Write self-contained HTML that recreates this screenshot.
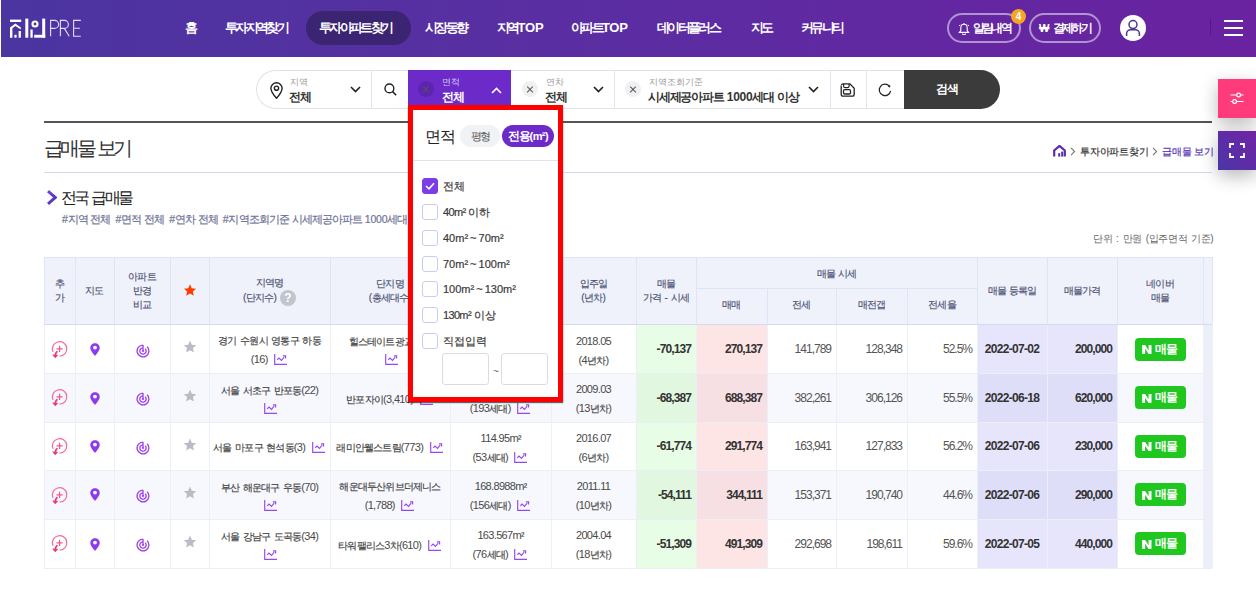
<!DOCTYPE html>
<html lang="ko"><head><meta charset="utf-8"><title>급매물 보기</title>
<style>
*{box-sizing:border-box;margin:0;padding:0}
html,body{width:1256px;height:601px;overflow:hidden;background:#fff}
body{position:relative;font-family:"Liberation Sans",sans-serif;color:#333}
.abs{position:absolute}
.hdr{position:absolute;left:1px;top:0;width:1255px;height:57px;background:linear-gradient(90deg,#4b35a0 0%,#5a2ea2 45%,#6a22a0 100%)}
.nav{position:absolute;top:0;height:57px;line-height:55px;color:#fff;font-weight:bold;font-size:13px;letter-spacing:-2.7px;white-space:nowrap}
.pill{position:absolute;left:305px;top:11px;width:105px;height:34px;border-radius:17px;background:#3b2472}
.hbtn{position:absolute;top:13px;height:30px;border:2px solid rgba(255,255,255,.5);border-radius:15px;color:#fff;font-size:11.5px;font-weight:bold;letter-spacing:-2.6px;white-space:nowrap}
.badge{position:absolute;left:1010px;top:9px;width:15px;height:15px;border-radius:7.5px;background:#f6a623;color:#fff;font-size:10px;font-weight:bold;text-align:center;line-height:15px}
.search{position:absolute;left:256px;top:70px;width:744px;height:39px}
.sb-frame{position:absolute;left:0;top:0;width:700px;height:39px;border:1px solid #e1e3ea;border-right:none;border-radius:19.5px 0 0 19.5px;background:#fff}
.seg-div{position:absolute;top:0;width:1px;height:39px;background:#e3e5ee}
.lbl{position:absolute;font-size:8.5px;color:#999;letter-spacing:0;white-space:nowrap;line-height:10px}
.val{position:absolute;font-size:12px;font-weight:bold;color:#333;letter-spacing:-0.7px;white-space:nowrap;line-height:13px}
.xc{position:absolute;width:16px;height:16px;border-radius:8px;background:#f0f0f2}
.xc:before,.xc:after{content:"";position:absolute;left:4px;top:7.5px;width:8px;height:1.2px;background:#555;transform:rotate(45deg)}
.xc:after{transform:rotate(-45deg)}
.line-dark{position:absolute;left:44px;top:121px;width:1168px;height:2px;background:#555}
.line-light{position:absolute;left:44px;top:172px;width:1168px;height:1px;background:#d5d9ee}
.title{position:absolute;left:44px;top:138px;font-size:19.5px;color:#333;letter-spacing:-3.6px;word-spacing:2px;white-space:nowrap;line-height:20px}
.crumb{position:absolute;top:146px;font-size:10px;letter-spacing:-0.2px;white-space:nowrap;line-height:11px;color:#333;-webkit-text-stroke:0.2px currentColor}
.sub{position:absolute;left:61px;top:189px;font-size:16px;color:#222;letter-spacing:-2.7px;word-spacing:2px;line-height:17px;white-space:nowrap}
.tags{position:absolute;left:62px;top:214px;font-size:10.5px;color:#6d7396;letter-spacing:-0.9px;word-spacing:0.5px!important;line-height:11px;white-space:nowrap;-webkit-text-stroke:0.2px #6d7396}
.unit{position:absolute;left:1093px;top:233px;font-size:10px;color:#666;letter-spacing:-0.4px;line-height:11px;white-space:nowrap}
.thead{position:absolute;left:44px;top:257px;width:1168px;height:68px;background:#eff2fb;border-top:1px solid #dfe5f6}
.th{position:absolute;display:flex;align-items:center;justify-content:center;text-align:center;font-size:10px;color:#4a5072;letter-spacing:-0.9px;word-spacing:1px;line-height:14px;font-weight:normal;-webkit-text-stroke:0.15px #4a5072}
.rowbg{position:absolute;left:44px;width:1168px}
.cell{position:absolute;display:flex;align-items:center;justify-content:center}
.cell.r{justify-content:flex-end;padding-right:5px}
.cell.c{text-align:center}
.t{font-size:10px;color:#3c3c3c;-webkit-text-stroke:0.15px #3c3c3c;letter-spacing:-0.8px;line-height:18px;white-space:nowrap;padding-top:3px}
.t .ch{vertical-align:-2px;margin-left:3px}
.num{font-size:12px;color:#555;letter-spacing:-1px;white-space:nowrap}
.num.b{font-weight:bold;color:#333;letter-spacing:-0.9px}
.num.bd{font-weight:bold;color:#333;letter-spacing:-0.7px}
.nbtn{display:inline-block;width:51px;height:23px;border-radius:4px;background:#1fc71f;color:#fff;font-size:11.5px;font-weight:bold;text-align:center;line-height:23px;letter-spacing:-1.4px;white-space:nowrap;padding-right:1px}
.nbtn b{font-size:13px;font-family:"Liberation Sans",sans-serif;letter-spacing:0;margin-right:3px;-webkit-text-stroke:0.6px #fff}
.vl{position:absolute;width:1px;background:#eceef8}
.a{font-size:1.1em;letter-spacing:-0.06em}
.t .a{color:#4a4a4a;-webkit-text-stroke:0}
.nav .a,.val .a,.tags .a,.crumb .a,.cbl .a,.unit .a,.th .a{font-size:1em;letter-spacing:-0.02em}
.val,.tags,.unit,.t,.th{word-spacing:1.5px}
.cbl{word-spacing:-1px}
.cbl .a{letter-spacing:-0.06em}
.hl{position:absolute;left:44px;width:1168px;height:1px;background:#eceef6}
.ic svg{display:block}
.ic .nbtn svg{display:inline-block}
.dd{position:absolute;left:408px;top:105px;width:155px;height:297px;background:#fff;border:5px solid #ff0000;box-shadow:0 1px 1px rgba(0,0,0,.6)}
.cb{position:absolute;left:9px;width:16px;height:16px;border:1.3px solid #c9cdef;border-radius:3px;background:#fff}
.cbl{position:absolute;left:30px;font-size:11px;color:#3a3a3a;letter-spacing:0;line-height:12px;white-space:nowrap;-webkit-text-stroke:0.2px #3a3a3a}
.fab{position:absolute;left:1218px;width:38px;height:39px;box-shadow:0 6px 18px rgba(0,0,0,.28)}
</style></head><body>

<!-- HEADER -->
<div class="hdr">
  <svg class="abs" style="left:8px;top:18px" width="76" height="21" viewBox="0 0 76 21">
    <g fill="#fff">
      <rect x="1" y="1.6" width="11.2" height="2.4"/>
      <path d="M1 19.7V9.4L6.4 5.6L11.8 9.4V11.6L6.4 8L3.4 10.2V19.7Z"/>
      <rect x="5.4" y="16.8" width="2.2" height="2.9"/>
      <rect x="9.6" y="13" width="2.3" height="6.7"/>
      <rect x="16.3" y="0.6" width="3" height="19.1"/>
      <circle cx="26" cy="6" r="2.5" fill="none" stroke="#fff" stroke-width="2.1"/>
      <rect x="21.4" y="11.5" width="2.3" height="8.2"/>
      <rect x="33.2" y="0.6" width="3" height="19.1"/>
      <rect x="25.2" y="16.8" width="11" height="2.9"/>
    </g>
    <g fill="none" stroke="#e6dcf7" stroke-width="1.1">
      <path d="M41.6 18.2V2.4H45.6A4 4 0 0 1 45.6 10.4H41.6"/>
      <path d="M51.4 18.2V2.4H55.4A4 4 0 0 1 55.4 10.4H51.4M55.4 10.4L60.2 18.2"/>
      <path d="M71.8 2.4H64.6V18.2H71.8M64.6 10.3H70.9"/>
    </g>
  </svg>
  <div class="pill"></div>
  <div class="nav" style="left:184px">홈</div>
  <div class="nav" style="left:224px">투자지역찾기</div>
  <div class="nav" style="left:318px">투자아파트찾기</div>
  <div class="nav" style="left:424px">시장동향</div>
  <div class="nav" style="left:496px">지역<span class="a">TOP</span></div>
  <div class="nav" style="left:570px">아파트<span class="a">TOP</span></div>
  <div class="nav" style="left:656px">데이터플러스</div>
  <div class="nav" style="left:750px">지도</div>
  <div class="nav" style="left:800px">커뮤니티</div>

  <div class="hbtn" style="left:946px;width:74px">
    <svg class="abs" style="left:9px;top:8px" width="12" height="12" viewBox="0 0 12 12"><path d="M6 1.2C3.8 1.2 2.8 2.9 2.8 4.9V7.6L1.4 9.4H10.6L9.2 7.6V4.9C9.2 2.9 8.2 1.2 6 1.2Z" fill="none" stroke="#fff" stroke-width="1.1"/><path d="M4.6 10.5A1.4 1.4 0 0 0 7.4 10.5" fill="none" stroke="#fff" stroke-width="1.1"/><path d="M1.2 3L2.2 1.8M10.8 3L9.8 1.8M6 0V1" stroke="#fff" stroke-width="1"/></svg>
    <span class="abs" style="left:23.5px;top:6.5px;line-height:13px">알림내역</span>
  </div>
  <div class="badge">4</div>
  <div class="hbtn" style="left:1028px;width:72px">
    <span class="abs" style="left:8px;top:7px;line-height:13px;font-size:11px;letter-spacing:-1px">₩</span>
    <span class="abs" style="left:21.5px;top:6.5px;line-height:13px">결제하기</span>
  </div>
  <div class="abs" style="left:1119px;top:15px;width:26px;height:26px;border-radius:13px;background:#fff">
    <svg class="abs" style="left:5px;top:4px" width="16" height="18" viewBox="0 0 16 18"><circle cx="8" cy="5.6" r="4" fill="none" stroke="#4b3598" stroke-width="1.5"/><path d="M1.6 17V14.6C1.6 12.3 3.6 10.8 5.8 10.8H10.2C12.4 10.8 14.4 12.3 14.4 14.6V17" fill="none" stroke="#4b3598" stroke-width="1.5"/></svg>
  </div>
  <div class="abs" style="left:1209px;top:19px;width:1px;height:17px;background:#4d1d86"></div>
  <div class="abs" style="left:1223px;top:20px;width:19px;height:2px;background:#fff"></div>
  <div class="abs" style="left:1223px;top:27px;width:19px;height:2px;background:#fff"></div>
  <div class="abs" style="left:1223px;top:34px;width:19px;height:2px;background:#fff"></div>
</div>

<!-- SEARCH BAR -->
<div class="search">
  <div class="sb-frame"></div>
  <!-- region segment -->
  <svg class="abs" style="left:14px;top:12px" width="13" height="17" viewBox="0 0 13 17"><path d="M6.5 0.8C3.4 0.8 0.9 3.2 0.9 6.3C0.9 10.2 6.5 16.2 6.5 16.2C6.5 16.2 12.1 10.2 12.1 6.3C12.1 3.2 9.6 0.8 6.5 0.8Z" fill="none" stroke="#222" stroke-width="1.4"/><circle cx="6.5" cy="6.2" r="2.1" fill="none" stroke="#222" stroke-width="1.4"/></svg>
  <div class="lbl" style="left:34px;top:7px">지역</div>
  <div class="val" style="left:33px;top:21px">전체</div>
  <svg class="abs" style="left:94px;top:16px" width="11" height="7" viewBox="0 0 11 7"><path d="M1 1L5.5 5.6L10 1" fill="none" stroke="#222" stroke-width="1.6"/></svg>
  <div class="seg-div" style="left:115px"></div>
  <svg class="abs" style="left:128px;top:13px" width="13" height="13" viewBox="0 0 13 13"><circle cx="5.4" cy="5.4" r="4.4" fill="none" stroke="#222" stroke-width="1.4"/><path d="M8.6 8.6L12.2 12.2" stroke="#222" stroke-width="1.5"/></svg>
  <!-- area segment active -->
  <div class="abs" style="left:152px;top:0;width:103px;height:39px;background:#6c2bc8"></div>
  <div class="xc" style="left:162px;top:11px;background:#5e24b0"></div>
  <div class="lbl" style="left:186px;top:7px;color:#d6c4f3">면적</div>
  <div class="val" style="left:186px;top:21px;color:#fff">전체</div>
  <svg class="abs" style="left:235px;top:17px" width="11" height="7" viewBox="0 0 11 7"><path d="M1 6L5.5 1.4L10 6" fill="none" stroke="#fff" stroke-width="1.6"/></svg>
  <!-- year segment -->
  <div class="xc" style="left:266px;top:11px"></div>
  <div class="lbl" style="left:290px;top:7px">연차</div>
  <div class="val" style="left:289px;top:21px">전체</div>
  <svg class="abs" style="left:337px;top:16px" width="11" height="7" viewBox="0 0 11 7"><path d="M1 1L5.5 5.6L10 1" fill="none" stroke="#222" stroke-width="1.6"/></svg>
  <div class="seg-div" style="left:358px"></div>
  <!-- criteria -->
  <div class="xc" style="left:369px;top:11px"></div>
  <div class="lbl" style="left:393px;top:7px">지역조회기준</div>
  <div class="val" style="left:392px;top:21px;letter-spacing:-1.2px;word-spacing:1px">시세제공아파트 <span class="a">1000</span>세대 이상</div>
  <svg class="abs" style="left:552px;top:16px" width="11" height="7" viewBox="0 0 11 7"><path d="M1 1L5.5 5.6L10 1" fill="none" stroke="#222" stroke-width="1.6"/></svg>
  <div class="seg-div" style="left:574px"></div>
  <svg class="abs" style="left:584px;top:13px" width="15" height="14" viewBox="0 0 15 14"><path d="M1.2 2.6V11.2Q1.2 13.1 3.1 13.1H12.3Q14.2 13.1 14.2 11.2V5.2L9.9 0.8H3.1Q1.6 0.8 1.3 1.9" fill="none" stroke="#222" stroke-width="1.3"/><path d="M3.6 0.9V2.9Q3.6 4.7 5.4 4.7H7.3Q9.1 4.7 9.1 2.9V0.9" fill="none" stroke="#222" stroke-width="1.2"/><rect x="3.5" y="6.7" width="7" height="4.3" rx="1.3" fill="none" stroke="#222" stroke-width="1.3"/></svg>
  <div class="seg-div" style="left:610px"></div>
  <svg class="abs" style="left:622px;top:13px" width="14" height="14" viewBox="0 0 14 14"><path d="M12.6 7.8A5.7 5.7 0 1 1 11.3 3.2" fill="none" stroke="#222" stroke-width="1.2"/><circle cx="11.3" cy="3.3" r="1.1" fill="#222"/></svg>
  <!-- search button -->
  <div class="abs" style="left:648px;top:0;width:96px;height:39px;background:#3b3b3b;border-radius:0 19.5px 19.5px 0"></div>
  <div class="abs" style="left:680px;top:13px;font-size:12px;font-weight:bold;color:#fff;letter-spacing:-1.4px;line-height:13px">검색</div>
</div>

<div class="line-dark"></div>

<div class="title">급매물 보기</div>
<svg class="abs" style="left:1053px;top:145px" width="13" height="12" viewBox="0 0 13 12"><path d="M1.2 11.6V5.4L6.5 0.9L11.8 5.4V11.6" fill="none" stroke="#5b2cb0" stroke-width="2.2"/><rect x="5.2" y="8.2" width="2" height="3.4" fill="#5b2cb0"/><rect x="8.2" y="6.6" width="2" height="5" fill="#5b2cb0"/></svg>
<svg class="abs" style="left:1069.5px;top:147px" width="6" height="9" viewBox="0 0 6 9"><path d="M1 0.8L4.6 4.5L1 8.2" fill="none" stroke="#777" stroke-width="1.1"/></svg>
<div class="crumb" style="left:1080px">투자아파트찾기</div>
<svg class="abs" style="left:1151.5px;top:147px" width="6" height="9" viewBox="0 0 6 9"><path d="M1 0.8L4.6 4.5L1 8.2" fill="none" stroke="#777" stroke-width="1.1"/></svg>
<div class="crumb" style="left:1162px;color:#5b3ab8">급매물 보기</div>

<div class="line-light"></div>

<svg class="abs" style="left:47px;top:190px" width="10" height="15" viewBox="0 0 10 15"><defs><linearGradient id="gch" x1="0" y1="0" x2="1" y2="1"><stop offset="0" stop-color="#7d3ee0"/><stop offset="1" stop-color="#4a35b0"/></linearGradient></defs><path d="M1 1.2L8.4 7.5L1 13.8" fill="none" stroke="url(#gch)" stroke-width="3"/></svg>
<div class="sub">전국 급매물</div>
<div class="tags"><span class="a">#</span>지역 전체  <span class="a">#</span>면적 전체  <span class="a">#</span>연차 전체  <span class="a">#</span>지역조회기준 시세제공아파트 <span class="a">1000</span>세대 이상</div>
<div class="unit">단위 <span class="a">:</span> 만원 <span class="a">(</span>입주면적 기준<span class="a">)</span></div>

<!-- TABLE -->
<div class="thead"></div>
<div class="rowbg" style="top:325px;height:48px;background:#ffffff"></div>
<div class="rowbg" style="left:636px;width:60px;top:325px;height:48px;background:#e8fde5"></div>
<div class="rowbg" style="left:696px;width:71px;top:325px;height:48px;background:#fde5e5"></div>
<div class="rowbg" style="left:977px;width:140px;top:325px;height:48px;background:#e6e5fc"></div>
<div class="rowbg" style="left:1203px;width:9px;top:325px;height:48px;background:#eceef8"></div>
<div class="abs ic" style="left:51px;top:340px"><svg width="18" height="19" viewBox="0 0 18 19"><path d="M8.6 16.1A7.2 7.2 0 1 0 2.02 11.83" fill="none" stroke="#f26a98" stroke-width="1.2"/><path d="M8.6 5.8V12M5.5 8.9H11.7" stroke="#f0588c" stroke-width="1.2"/><path d="M6.4 11.1Q4.6 12.6 4.2 15.6" fill="none" stroke="#e8387a" stroke-width="1.6"/><path d="M1.1 14.6L7.2 15L4.2 18.2Z" fill="#e8387a"/></svg></div>
<div class="abs ic" style="left:90px;top:343px"><svg width="10" height="13" viewBox="0 0 10 13"><path d="M5 0.3C2.4 0.3 0.3 2.3 0.3 4.9C0.3 8 5 12.8 5 12.8C5 12.8 9.7 8 9.7 4.9C9.7 2.3 7.6 0.3 5 0.3Z" fill="#8d3af0"/><circle cx="5" cy="4.6" r="1.9" fill="#fff"/></svg></div>
<div class="abs ic" style="left:135.5px;top:343.7px"><svg width="14" height="14" viewBox="0 0 14 14"><path d="M7 1.1A5.9 5.9 0 1 0 11.17 2.83" fill="none" stroke="#9b3ee8" stroke-width="1.3"/><path d="M7 3.8A3.2 3.2 0 1 0 9.26 4.74" fill="none" stroke="#9b3ee8" stroke-width="1.3"/><path d="M7 7.3V0.9" stroke="#9b3ee8" stroke-width="1.3"/><circle cx="7" cy="7.1" r="1" fill="#9b3ee8"/></svg></div>
<div class="abs ic" style="left:183px;top:340px"><svg width="14" height="14" viewBox="0 0 24 23"><path d="M12 0.5L15.1 7.6L22.8 8.3L17 13.4L18.7 21L12 17L5.3 21L7 13.4L1.2 8.3L8.9 7.6Z" fill="#b9bcc4"/></svg></div>
<div class="cell c" style="left:209px;top:325px;width:121px;height:48px"><div class="t">경기 수원시 영통구 하동<br><span class="a">(16)</span> <svg class="ch" width="14" height="11" viewBox="0 0 14 11"><path d="M0.7 0V10.3H13" fill="none" stroke="#9448ee" stroke-width="1.15"/><path d="M3.2 5.8L5 4L7.5 6.4L10.2 3.2" fill="none" stroke="#9448ee" stroke-width="1.1"/><path d="M9 1.8H11.6V4.4" fill="none" stroke="#9448ee" stroke-width="1.15"/></svg></div></div>
<div class="cell c" style="left:330px;top:325px;width:120px;height:48px"><div class="t">힐스테이트광교중앙<br><svg class="ch" width="14" height="11" viewBox="0 0 14 11"><path d="M0.7 0V10.3H13" fill="none" stroke="#9448ee" stroke-width="1.15"/><path d="M3.2 5.8L5 4L7.5 6.4L10.2 3.2" fill="none" stroke="#9448ee" stroke-width="1.1"/><path d="M9 1.8H11.6V4.4" fill="none" stroke="#9448ee" stroke-width="1.15"/></svg></div></div>
<div class="cell c" style="left:450px;top:325px;width:101px;height:48px"><div class="t"></div></div>
<div class="cell c" style="left:551px;top:325px;width:85px;height:48px"><div class="t"><span class="a">2018.05</span><br><span class="a">(4</span>년차<span class="a">)</span></div></div>
<div class="cell r" style="left:636px;top:325px;width:60px;height:48px"><span class="num b">-70,137</span></div>
<div class="cell r" style="left:696px;top:325px;width:71px;height:48px"><span class="num b">270,137</span></div>
<div class="cell r" style="left:767px;top:325px;width:69px;height:48px"><span class="num ">141,789</span></div>
<div class="cell r" style="left:836px;top:325px;width:71px;height:48px"><span class="num ">128,348</span></div>
<div class="cell r" style="left:907px;top:325px;width:70px;height:48px"><span class="num ">52.5%</span></div>
<div class="cell c" style="left:977px;top:325px;width:70px;height:48px"><span class="num bd">2022-07-02</span></div>
<div class="cell r" style="left:1047px;top:325px;width:70px;height:48px"><span class="num b">200,000</span></div>
<div class="cell ic" style="left:1117px;top:325px;width:86px;height:48px"><span class="nbtn"><svg width="10" height="9" viewBox="0 0 10 9.2" style="vertical-align:-1.5px;margin-right:3px"><path d="M0 0H3.1L6.6 5.3V0H9.6V9.2H6.6L3.1 3.9V9.2H0Z" fill="#fff"/></svg>매물</span></div>
<div class="rowbg" style="top:373px;height:49px;background:#f7f8fd"></div>
<div class="rowbg" style="left:636px;width:60px;top:373px;height:49px;background:#e2f7df"></div>
<div class="rowbg" style="left:696px;width:71px;top:373px;height:49px;background:#f7e0e4"></div>
<div class="rowbg" style="left:977px;width:140px;top:373px;height:49px;background:#dfdef8"></div>
<div class="rowbg" style="left:1203px;width:9px;top:373px;height:49px;background:#eceef8"></div>
<div class="abs ic" style="left:51px;top:388px"><svg width="18" height="19" viewBox="0 0 18 19"><path d="M8.6 16.1A7.2 7.2 0 1 0 2.02 11.83" fill="none" stroke="#f26a98" stroke-width="1.2"/><path d="M8.6 5.8V12M5.5 8.9H11.7" stroke="#f0588c" stroke-width="1.2"/><path d="M6.4 11.1Q4.6 12.6 4.2 15.6" fill="none" stroke="#e8387a" stroke-width="1.6"/><path d="M1.1 14.6L7.2 15L4.2 18.2Z" fill="#e8387a"/></svg></div>
<div class="abs ic" style="left:90px;top:392px"><svg width="10" height="13" viewBox="0 0 10 13"><path d="M5 0.3C2.4 0.3 0.3 2.3 0.3 4.9C0.3 8 5 12.8 5 12.8C5 12.8 9.7 8 9.7 4.9C9.7 2.3 7.6 0.3 5 0.3Z" fill="#8d3af0"/><circle cx="5" cy="4.6" r="1.9" fill="#fff"/></svg></div>
<div class="abs ic" style="left:135.5px;top:392.2px"><svg width="14" height="14" viewBox="0 0 14 14"><path d="M7 1.1A5.9 5.9 0 1 0 11.17 2.83" fill="none" stroke="#9b3ee8" stroke-width="1.3"/><path d="M7 3.8A3.2 3.2 0 1 0 9.26 4.74" fill="none" stroke="#9b3ee8" stroke-width="1.3"/><path d="M7 7.3V0.9" stroke="#9b3ee8" stroke-width="1.3"/><circle cx="7" cy="7.1" r="1" fill="#9b3ee8"/></svg></div>
<div class="abs ic" style="left:183px;top:389px"><svg width="14" height="14" viewBox="0 0 24 23"><path d="M12 0.5L15.1 7.6L22.8 8.3L17 13.4L18.7 21L12 17L5.3 21L7 13.4L1.2 8.3L8.9 7.6Z" fill="#b9bcc4"/></svg></div>
<div class="cell c" style="left:209px;top:373px;width:121px;height:49px"><div class="t">서울 서초구 반포동<span class="a">(22)</span><br><svg class="ch" width="14" height="11" viewBox="0 0 14 11"><path d="M0.7 0V10.3H13" fill="none" stroke="#9448ee" stroke-width="1.15"/><path d="M3.2 5.8L5 4L7.5 6.4L10.2 3.2" fill="none" stroke="#9448ee" stroke-width="1.1"/><path d="M9 1.8H11.6V4.4" fill="none" stroke="#9448ee" stroke-width="1.15"/></svg></div></div>
<div class="cell c" style="left:330px;top:373px;width:120px;height:49px"><div class="t">반포자이<span class="a">(3,410)</span> <svg class="ch" width="14" height="11" viewBox="0 0 14 11"><path d="M0.7 0V10.3H13" fill="none" stroke="#9448ee" stroke-width="1.15"/><path d="M3.2 5.8L5 4L7.5 6.4L10.2 3.2" fill="none" stroke="#9448ee" stroke-width="1.1"/><path d="M9 1.8H11.6V4.4" fill="none" stroke="#9448ee" stroke-width="1.15"/></svg></div></div>
<div class="cell c" style="left:450px;top:373px;width:101px;height:49px"><div class="t"><span class="a">84.97m</span>²<br><span class="a">(193</span>세대<span class="a">)</span> <svg class="ch" width="14" height="11" viewBox="0 0 14 11"><path d="M0.7 0V10.3H13" fill="none" stroke="#9448ee" stroke-width="1.15"/><path d="M3.2 5.8L5 4L7.5 6.4L10.2 3.2" fill="none" stroke="#9448ee" stroke-width="1.1"/><path d="M9 1.8H11.6V4.4" fill="none" stroke="#9448ee" stroke-width="1.15"/></svg></div></div>
<div class="cell c" style="left:551px;top:373px;width:85px;height:49px"><div class="t"><span class="a">2009.03</span><br><span class="a">(13</span>년차<span class="a">)</span></div></div>
<div class="cell r" style="left:636px;top:373px;width:60px;height:49px"><span class="num b">-68,387</span></div>
<div class="cell r" style="left:696px;top:373px;width:71px;height:49px"><span class="num b">688,387</span></div>
<div class="cell r" style="left:767px;top:373px;width:69px;height:49px"><span class="num ">382,261</span></div>
<div class="cell r" style="left:836px;top:373px;width:71px;height:49px"><span class="num ">306,126</span></div>
<div class="cell r" style="left:907px;top:373px;width:70px;height:49px"><span class="num ">55.5%</span></div>
<div class="cell c" style="left:977px;top:373px;width:70px;height:49px"><span class="num bd">2022-06-18</span></div>
<div class="cell r" style="left:1047px;top:373px;width:70px;height:49px"><span class="num b">620,000</span></div>
<div class="cell ic" style="left:1117px;top:373px;width:86px;height:49px"><span class="nbtn"><svg width="10" height="9" viewBox="0 0 10 9.2" style="vertical-align:-1.5px;margin-right:3px"><path d="M0 0H3.1L6.6 5.3V0H9.6V9.2H6.6L3.1 3.9V9.2H0Z" fill="#fff"/></svg>매물</span></div>
<div class="rowbg" style="top:422px;height:48px;background:#ffffff"></div>
<div class="rowbg" style="left:636px;width:60px;top:422px;height:48px;background:#e8fde5"></div>
<div class="rowbg" style="left:696px;width:71px;top:422px;height:48px;background:#fde5e5"></div>
<div class="rowbg" style="left:977px;width:140px;top:422px;height:48px;background:#e6e5fc"></div>
<div class="rowbg" style="left:1203px;width:9px;top:422px;height:48px;background:#eceef8"></div>
<div class="abs ic" style="left:51px;top:437px"><svg width="18" height="19" viewBox="0 0 18 19"><path d="M8.6 16.1A7.2 7.2 0 1 0 2.02 11.83" fill="none" stroke="#f26a98" stroke-width="1.2"/><path d="M8.6 5.8V12M5.5 8.9H11.7" stroke="#f0588c" stroke-width="1.2"/><path d="M6.4 11.1Q4.6 12.6 4.2 15.6" fill="none" stroke="#e8387a" stroke-width="1.6"/><path d="M1.1 14.6L7.2 15L4.2 18.2Z" fill="#e8387a"/></svg></div>
<div class="abs ic" style="left:90px;top:440px"><svg width="10" height="13" viewBox="0 0 10 13"><path d="M5 0.3C2.4 0.3 0.3 2.3 0.3 4.9C0.3 8 5 12.8 5 12.8C5 12.8 9.7 8 9.7 4.9C9.7 2.3 7.6 0.3 5 0.3Z" fill="#8d3af0"/><circle cx="5" cy="4.6" r="1.9" fill="#fff"/></svg></div>
<div class="abs ic" style="left:135.5px;top:440.7px"><svg width="14" height="14" viewBox="0 0 14 14"><path d="M7 1.1A5.9 5.9 0 1 0 11.17 2.83" fill="none" stroke="#9b3ee8" stroke-width="1.3"/><path d="M7 3.8A3.2 3.2 0 1 0 9.26 4.74" fill="none" stroke="#9b3ee8" stroke-width="1.3"/><path d="M7 7.3V0.9" stroke="#9b3ee8" stroke-width="1.3"/><circle cx="7" cy="7.1" r="1" fill="#9b3ee8"/></svg></div>
<div class="abs ic" style="left:183px;top:438px"><svg width="14" height="14" viewBox="0 0 24 23"><path d="M12 0.5L15.1 7.6L22.8 8.3L17 13.4L18.7 21L12 17L5.3 21L7 13.4L1.2 8.3L8.9 7.6Z" fill="#b9bcc4"/></svg></div>
<div class="cell c" style="left:209px;top:422px;width:121px;height:48px"><div class="t">서울 마포구 현석동<span class="a">(3)</span> <svg class="ch" width="14" height="11" viewBox="0 0 14 11"><path d="M0.7 0V10.3H13" fill="none" stroke="#9448ee" stroke-width="1.15"/><path d="M3.2 5.8L5 4L7.5 6.4L10.2 3.2" fill="none" stroke="#9448ee" stroke-width="1.1"/><path d="M9 1.8H11.6V4.4" fill="none" stroke="#9448ee" stroke-width="1.15"/></svg></div></div>
<div class="cell c" style="left:330px;top:422px;width:120px;height:48px"><div class="t">래미안웰스트림<span class="a">(773)</span> <svg class="ch" width="14" height="11" viewBox="0 0 14 11"><path d="M0.7 0V10.3H13" fill="none" stroke="#9448ee" stroke-width="1.15"/><path d="M3.2 5.8L5 4L7.5 6.4L10.2 3.2" fill="none" stroke="#9448ee" stroke-width="1.1"/><path d="M9 1.8H11.6V4.4" fill="none" stroke="#9448ee" stroke-width="1.15"/></svg></div></div>
<div class="cell c" style="left:450px;top:422px;width:101px;height:48px"><div class="t"><span class="a">114.95m</span>²<br><span class="a">(53</span>세대<span class="a">)</span> <svg class="ch" width="14" height="11" viewBox="0 0 14 11"><path d="M0.7 0V10.3H13" fill="none" stroke="#9448ee" stroke-width="1.15"/><path d="M3.2 5.8L5 4L7.5 6.4L10.2 3.2" fill="none" stroke="#9448ee" stroke-width="1.1"/><path d="M9 1.8H11.6V4.4" fill="none" stroke="#9448ee" stroke-width="1.15"/></svg></div></div>
<div class="cell c" style="left:551px;top:422px;width:85px;height:48px"><div class="t"><span class="a">2016.07</span><br><span class="a">(6</span>년차<span class="a">)</span></div></div>
<div class="cell r" style="left:636px;top:422px;width:60px;height:48px"><span class="num b">-61,774</span></div>
<div class="cell r" style="left:696px;top:422px;width:71px;height:48px"><span class="num b">291,774</span></div>
<div class="cell r" style="left:767px;top:422px;width:69px;height:48px"><span class="num ">163,941</span></div>
<div class="cell r" style="left:836px;top:422px;width:71px;height:48px"><span class="num ">127,833</span></div>
<div class="cell r" style="left:907px;top:422px;width:70px;height:48px"><span class="num ">56.2%</span></div>
<div class="cell c" style="left:977px;top:422px;width:70px;height:48px"><span class="num bd">2022-07-06</span></div>
<div class="cell r" style="left:1047px;top:422px;width:70px;height:48px"><span class="num b">230,000</span></div>
<div class="cell ic" style="left:1117px;top:422px;width:86px;height:48px"><span class="nbtn"><svg width="10" height="9" viewBox="0 0 10 9.2" style="vertical-align:-1.5px;margin-right:3px"><path d="M0 0H3.1L6.6 5.3V0H9.6V9.2H6.6L3.1 3.9V9.2H0Z" fill="#fff"/></svg>매물</span></div>
<div class="rowbg" style="top:470px;height:49px;background:#f7f8fd"></div>
<div class="rowbg" style="left:636px;width:60px;top:470px;height:49px;background:#e2f7df"></div>
<div class="rowbg" style="left:696px;width:71px;top:470px;height:49px;background:#f7e0e4"></div>
<div class="rowbg" style="left:977px;width:140px;top:470px;height:49px;background:#dfdef8"></div>
<div class="rowbg" style="left:1203px;width:9px;top:470px;height:49px;background:#eceef8"></div>
<div class="abs ic" style="left:51px;top:486px"><svg width="18" height="19" viewBox="0 0 18 19"><path d="M8.6 16.1A7.2 7.2 0 1 0 2.02 11.83" fill="none" stroke="#f26a98" stroke-width="1.2"/><path d="M8.6 5.8V12M5.5 8.9H11.7" stroke="#f0588c" stroke-width="1.2"/><path d="M6.4 11.1Q4.6 12.6 4.2 15.6" fill="none" stroke="#e8387a" stroke-width="1.6"/><path d="M1.1 14.6L7.2 15L4.2 18.2Z" fill="#e8387a"/></svg></div>
<div class="abs ic" style="left:90px;top:488px"><svg width="10" height="13" viewBox="0 0 10 13"><path d="M5 0.3C2.4 0.3 0.3 2.3 0.3 4.9C0.3 8 5 12.8 5 12.8C5 12.8 9.7 8 9.7 4.9C9.7 2.3 7.6 0.3 5 0.3Z" fill="#8d3af0"/><circle cx="5" cy="4.6" r="1.9" fill="#fff"/></svg></div>
<div class="abs ic" style="left:135.5px;top:489.2px"><svg width="14" height="14" viewBox="0 0 14 14"><path d="M7 1.1A5.9 5.9 0 1 0 11.17 2.83" fill="none" stroke="#9b3ee8" stroke-width="1.3"/><path d="M7 3.8A3.2 3.2 0 1 0 9.26 4.74" fill="none" stroke="#9b3ee8" stroke-width="1.3"/><path d="M7 7.3V0.9" stroke="#9b3ee8" stroke-width="1.3"/><circle cx="7" cy="7.1" r="1" fill="#9b3ee8"/></svg></div>
<div class="abs ic" style="left:183px;top:486px"><svg width="14" height="14" viewBox="0 0 24 23"><path d="M12 0.5L15.1 7.6L22.8 8.3L17 13.4L18.7 21L12 17L5.3 21L7 13.4L1.2 8.3L8.9 7.6Z" fill="#b9bcc4"/></svg></div>
<div class="cell c" style="left:209px;top:470px;width:121px;height:49px"><div class="t">부산 해운대구 우동<span class="a">(70)</span><br><svg class="ch" width="14" height="11" viewBox="0 0 14 11"><path d="M0.7 0V10.3H13" fill="none" stroke="#9448ee" stroke-width="1.15"/><path d="M3.2 5.8L5 4L7.5 6.4L10.2 3.2" fill="none" stroke="#9448ee" stroke-width="1.1"/><path d="M9 1.8H11.6V4.4" fill="none" stroke="#9448ee" stroke-width="1.15"/></svg></div></div>
<div class="cell c" style="left:330px;top:470px;width:120px;height:49px"><div class="t">해운대두산위브더제니스<br><span class="a">(1,788)</span> <svg class="ch" width="14" height="11" viewBox="0 0 14 11"><path d="M0.7 0V10.3H13" fill="none" stroke="#9448ee" stroke-width="1.15"/><path d="M3.2 5.8L5 4L7.5 6.4L10.2 3.2" fill="none" stroke="#9448ee" stroke-width="1.1"/><path d="M9 1.8H11.6V4.4" fill="none" stroke="#9448ee" stroke-width="1.15"/></svg></div></div>
<div class="cell c" style="left:450px;top:470px;width:101px;height:49px"><div class="t"><span class="a">168.8988m</span>²<br><span class="a">(156</span>세대<span class="a">)</span> <svg class="ch" width="14" height="11" viewBox="0 0 14 11"><path d="M0.7 0V10.3H13" fill="none" stroke="#9448ee" stroke-width="1.15"/><path d="M3.2 5.8L5 4L7.5 6.4L10.2 3.2" fill="none" stroke="#9448ee" stroke-width="1.1"/><path d="M9 1.8H11.6V4.4" fill="none" stroke="#9448ee" stroke-width="1.15"/></svg></div></div>
<div class="cell c" style="left:551px;top:470px;width:85px;height:49px"><div class="t"><span class="a">2011.11</span><br><span class="a">(10</span>년차<span class="a">)</span></div></div>
<div class="cell r" style="left:636px;top:470px;width:60px;height:49px"><span class="num b">-54,111</span></div>
<div class="cell r" style="left:696px;top:470px;width:71px;height:49px"><span class="num b">344,111</span></div>
<div class="cell r" style="left:767px;top:470px;width:69px;height:49px"><span class="num ">153,371</span></div>
<div class="cell r" style="left:836px;top:470px;width:71px;height:49px"><span class="num ">190,740</span></div>
<div class="cell r" style="left:907px;top:470px;width:70px;height:49px"><span class="num ">44.6%</span></div>
<div class="cell c" style="left:977px;top:470px;width:70px;height:49px"><span class="num bd">2022-07-06</span></div>
<div class="cell r" style="left:1047px;top:470px;width:70px;height:49px"><span class="num b">290,000</span></div>
<div class="cell ic" style="left:1117px;top:470px;width:86px;height:49px"><span class="nbtn"><svg width="10" height="9" viewBox="0 0 10 9.2" style="vertical-align:-1.5px;margin-right:3px"><path d="M0 0H3.1L6.6 5.3V0H9.6V9.2H6.6L3.1 3.9V9.2H0Z" fill="#fff"/></svg>매물</span></div>
<div class="rowbg" style="top:519px;height:49px;background:#ffffff"></div>
<div class="rowbg" style="left:636px;width:60px;top:519px;height:49px;background:#e8fde5"></div>
<div class="rowbg" style="left:696px;width:71px;top:519px;height:49px;background:#fde5e5"></div>
<div class="rowbg" style="left:977px;width:140px;top:519px;height:49px;background:#e6e5fc"></div>
<div class="rowbg" style="left:1203px;width:9px;top:519px;height:49px;background:#eceef8"></div>
<div class="abs ic" style="left:51px;top:534px"><svg width="18" height="19" viewBox="0 0 18 19"><path d="M8.6 16.1A7.2 7.2 0 1 0 2.02 11.83" fill="none" stroke="#f26a98" stroke-width="1.2"/><path d="M8.6 5.8V12M5.5 8.9H11.7" stroke="#f0588c" stroke-width="1.2"/><path d="M6.4 11.1Q4.6 12.6 4.2 15.6" fill="none" stroke="#e8387a" stroke-width="1.6"/><path d="M1.1 14.6L7.2 15L4.2 18.2Z" fill="#e8387a"/></svg></div>
<div class="abs ic" style="left:90px;top:538px"><svg width="10" height="13" viewBox="0 0 10 13"><path d="M5 0.3C2.4 0.3 0.3 2.3 0.3 4.9C0.3 8 5 12.8 5 12.8C5 12.8 9.7 8 9.7 4.9C9.7 2.3 7.6 0.3 5 0.3Z" fill="#8d3af0"/><circle cx="5" cy="4.6" r="1.9" fill="#fff"/></svg></div>
<div class="abs ic" style="left:135.5px;top:538.2px"><svg width="14" height="14" viewBox="0 0 14 14"><path d="M7 1.1A5.9 5.9 0 1 0 11.17 2.83" fill="none" stroke="#9b3ee8" stroke-width="1.3"/><path d="M7 3.8A3.2 3.2 0 1 0 9.26 4.74" fill="none" stroke="#9b3ee8" stroke-width="1.3"/><path d="M7 7.3V0.9" stroke="#9b3ee8" stroke-width="1.3"/><circle cx="7" cy="7.1" r="1" fill="#9b3ee8"/></svg></div>
<div class="abs ic" style="left:183px;top:535px"><svg width="14" height="14" viewBox="0 0 24 23"><path d="M12 0.5L15.1 7.6L22.8 8.3L17 13.4L18.7 21L12 17L5.3 21L7 13.4L1.2 8.3L8.9 7.6Z" fill="#b9bcc4"/></svg></div>
<div class="cell c" style="left:209px;top:519px;width:121px;height:49px"><div class="t">서울 강남구 도곡동<span class="a">(34)</span><br><svg class="ch" width="14" height="11" viewBox="0 0 14 11"><path d="M0.7 0V10.3H13" fill="none" stroke="#9448ee" stroke-width="1.15"/><path d="M3.2 5.8L5 4L7.5 6.4L10.2 3.2" fill="none" stroke="#9448ee" stroke-width="1.1"/><path d="M9 1.8H11.6V4.4" fill="none" stroke="#9448ee" stroke-width="1.15"/></svg></div></div>
<div class="cell c" style="left:330px;top:519px;width:120px;height:49px"><div class="t">타워팰리스<span class="a">3</span>차<span class="a">(610)</span> <svg class="ch" width="14" height="11" viewBox="0 0 14 11"><path d="M0.7 0V10.3H13" fill="none" stroke="#9448ee" stroke-width="1.15"/><path d="M3.2 5.8L5 4L7.5 6.4L10.2 3.2" fill="none" stroke="#9448ee" stroke-width="1.1"/><path d="M9 1.8H11.6V4.4" fill="none" stroke="#9448ee" stroke-width="1.15"/></svg></div></div>
<div class="cell c" style="left:450px;top:519px;width:101px;height:49px"><div class="t"><span class="a">163.567m</span>²<br><span class="a">(76</span>세대<span class="a">)</span> <svg class="ch" width="14" height="11" viewBox="0 0 14 11"><path d="M0.7 0V10.3H13" fill="none" stroke="#9448ee" stroke-width="1.15"/><path d="M3.2 5.8L5 4L7.5 6.4L10.2 3.2" fill="none" stroke="#9448ee" stroke-width="1.1"/><path d="M9 1.8H11.6V4.4" fill="none" stroke="#9448ee" stroke-width="1.15"/></svg></div></div>
<div class="cell c" style="left:551px;top:519px;width:85px;height:49px"><div class="t"><span class="a">2004.04</span><br><span class="a">(18</span>년차<span class="a">)</span></div></div>
<div class="cell r" style="left:636px;top:519px;width:60px;height:49px"><span class="num b">-51,309</span></div>
<div class="cell r" style="left:696px;top:519px;width:71px;height:49px"><span class="num b">491,309</span></div>
<div class="cell r" style="left:767px;top:519px;width:69px;height:49px"><span class="num ">292,698</span></div>
<div class="cell r" style="left:836px;top:519px;width:71px;height:49px"><span class="num ">198,611</span></div>
<div class="cell r" style="left:907px;top:519px;width:70px;height:49px"><span class="num ">59.6%</span></div>
<div class="cell c" style="left:977px;top:519px;width:70px;height:49px"><span class="num bd">2022-07-05</span></div>
<div class="cell r" style="left:1047px;top:519px;width:70px;height:49px"><span class="num b">440,000</span></div>
<div class="cell ic" style="left:1117px;top:519px;width:86px;height:49px"><span class="nbtn"><svg width="10" height="9" viewBox="0 0 10 9.2" style="vertical-align:-1.5px;margin-right:3px"><path d="M0 0H3.1L6.6 5.3V0H9.6V9.2H6.6L3.1 3.9V9.2H0Z" fill="#fff"/></svg>매물</span></div>
<div class="vl" style="left:44px;top:257px;height:67px;background:#dfe4f6"></div>
<div class="vl" style="left:44px;top:325px;height:243px"></div>
<div class="vl" style="left:75px;top:257px;height:67px;background:#dfe4f6"></div>
<div class="vl" style="left:75px;top:325px;height:243px"></div>
<div class="vl" style="left:114px;top:257px;height:67px;background:#dfe4f6"></div>
<div class="vl" style="left:114px;top:325px;height:243px"></div>
<div class="vl" style="left:170px;top:257px;height:67px;background:#dfe4f6"></div>
<div class="vl" style="left:170px;top:325px;height:243px"></div>
<div class="vl" style="left:209px;top:257px;height:67px;background:#dfe4f6"></div>
<div class="vl" style="left:209px;top:325px;height:243px"></div>
<div class="vl" style="left:330px;top:257px;height:67px;background:#dfe4f6"></div>
<div class="vl" style="left:330px;top:325px;height:243px"></div>
<div class="vl" style="left:450px;top:257px;height:67px;background:#dfe4f6"></div>
<div class="vl" style="left:450px;top:325px;height:243px"></div>
<div class="vl" style="left:551px;top:257px;height:67px;background:#dfe4f6"></div>
<div class="vl" style="left:551px;top:325px;height:243px"></div>
<div class="vl" style="left:636px;top:257px;height:67px;background:#dfe4f6"></div>
<div class="vl" style="left:636px;top:325px;height:243px"></div>
<div class="vl" style="left:696px;top:257px;height:67px;background:#dfe4f6"></div>
<div class="vl" style="left:696px;top:325px;height:243px"></div>
<div class="vl" style="left:767px;top:289px;height:35px;background:#dfe4f6"></div>
<div class="vl" style="left:767px;top:325px;height:243px"></div>
<div class="vl" style="left:836px;top:289px;height:35px;background:#dfe4f6"></div>
<div class="vl" style="left:836px;top:325px;height:243px"></div>
<div class="vl" style="left:907px;top:289px;height:35px;background:#dfe4f6"></div>
<div class="vl" style="left:907px;top:325px;height:243px"></div>
<div class="vl" style="left:977px;top:257px;height:67px;background:#dfe4f6"></div>
<div class="vl" style="left:977px;top:325px;height:243px"></div>
<div class="vl" style="left:1047px;top:257px;height:67px;background:#dfe4f6"></div>
<div class="vl" style="left:1047px;top:325px;height:243px"></div>
<div class="vl" style="left:1117px;top:257px;height:67px;background:#dfe4f6"></div>
<div class="vl" style="left:1117px;top:325px;height:243px"></div>
<div class="vl" style="left:1203px;top:257px;height:67px;background:#dfe4f6"></div>
<div class="vl" style="left:1203px;top:325px;height:243px"></div>
<div class="vl" style="left:1212px;top:257px;height:67px;background:#dfe4f6"></div>
<div class="vl" style="left:1212px;top:325px;height:243px"></div>
<div class="hl" style="top:373px"></div>
<div class="hl" style="top:422px"></div>
<div class="hl" style="top:470px"></div>
<div class="hl" style="top:519px"></div>
<div class="hl" style="top:568px"></div>
<div class="abs" style="left:44px;top:323.5px;width:1168px;height:1.5px;background:#d3dbf3"></div>
<div class="abs" style="left:696px;top:288px;width:281px;height:1px;background:#dfe4f4"></div>
<div class="th" style="left:44px;top:258px;width:31px;height:65px"><div>추<br>가</div></div>
<div class="th" style="left:75px;top:258px;width:39px;height:65px"><div>지도</div></div>
<div class="th" style="left:114px;top:258px;width:56px;height:65px"><div>아파트<br>반경<br>비교</div></div>
<div class="th ic" style="left:170px;top:258px;width:39px;height:65px"><svg width="14" height="13" viewBox="0 0 24 23"><path d="M12 0.5L15.1 7.6L22.8 8.3L17 13.4L18.7 21L12 17L5.3 21L7 13.4L1.2 8.3L8.9 7.6Z" fill="#ff3c00"/></svg></div>
<div class="th" style="left:209px;top:258px;width:121px;height:65px"><div>지역명<br><span class="a">(</span>단지수<span class="a">)</span> <span style="display:inline-block;width:16px;height:16px;border-radius:8px;background:#c2c5cd;color:#fff;font-size:12px;font-weight:bold;line-height:16px;vertical-align:middle;letter-spacing:0;-webkit-text-stroke:0;text-align:center">?</span></div></div>
<div class="th" style="left:330px;top:258px;width:120px;height:65px"><div>단지명<br><span class="a">(</span>총세대수<span class="a">)</span></div></div>
<div class="th" style="left:450px;top:258px;width:101px;height:65px"><div>면적<br><span class="a">(</span>세대수<span class="a">)</span></div></div>
<div class="th" style="left:551px;top:258px;width:85px;height:65px"><div>입주일<br><span class="a">(</span>년차<span class="a">)</span></div></div>
<div class="th" style="left:636px;top:258px;width:60px;height:65px"><div>매물<br>가격 <span class="a">-</span> 시세</div></div>
<div class="th" style="left:696px;top:258px;width:281px;height:31px"><div>매물 시세</div></div>
<div class="th" style="left:696px;top:288px;width:71px;height:34px"><div>매매</div></div>
<div class="th" style="left:767px;top:288px;width:69px;height:34px"><div>전세</div></div>
<div class="th" style="left:836px;top:288px;width:71px;height:34px"><div>매전갭</div></div>
<div class="th" style="left:907px;top:288px;width:70px;height:34px"><div>전세율</div></div>
<div class="th" style="left:977px;top:258px;width:70px;height:65px"><div>매물 등록일</div></div>
<div class="th" style="left:1047px;top:258px;width:70px;height:65px"><div>매물가격</div></div>
<div class="th" style="left:1117px;top:258px;width:86px;height:65px"><div>네이버<br>매물</div></div>

<!-- DROPDOWN -->
<div class="dd">
  <div class="abs" style="left:12px;top:18px;font-size:15.5px;color:#222;letter-spacing:-1.1px;line-height:17px;white-space:nowrap">면적</div>
  <div class="abs" style="left:47px;top:15px;width:40px;height:22px;border-radius:11px;background:#f1f2f6;color:#555;font-size:11px;letter-spacing:-1.5px;text-align:center;line-height:22px">평형</div>
  <div class="abs" style="left:89px;top:15px;width:52px;height:22px;border-radius:11px;background:#6c2bc8;color:#fff;font-size:12px;font-weight:bold;letter-spacing:-1.2px;text-align:center;line-height:22px;white-space:nowrap">전용<span style="font-size:11px;letter-spacing:-0.6px">(m²)</span></div>
  <div class="abs" style="left:0;top:50px;width:145px;height:1px;background:#e0e3ee"></div>
  <div class="cb" style="top:68px;background:#7b3ee6;border-color:#7b3ee6"><svg class="abs" style="left:2px;top:3px" width="10" height="8" viewBox="0 0 10 8"><path d="M1 4L4 6.8L9 1.2" fill="none" stroke="#fff" stroke-width="1.6"/></svg></div>
  <div class="cbl" style="top:70px">전체</div>
  <div class="cb" style="top:94px"></div><div class="cbl" style="top:96px"><span class="a">40m</span>² 이하</div>
  <div class="cb" style="top:120px"></div><div class="cbl" style="top:122px">40m² ~ 70m²</div>
  <div class="cb" style="top:146px"></div><div class="cbl" style="top:148px">70m² ~ 100m²</div>
  <div class="cb" style="top:171px"></div><div class="cbl" style="top:173px">100m² ~ 130m²</div>
  <div class="cb" style="top:197px"></div><div class="cbl" style="top:199px"><span class="a">130m</span>² 이상</div>
  <div class="cb" style="top:223px"></div><div class="cbl" style="top:225px">직접입력</div>
  <div class="abs" style="left:29px;top:243px;width:47px;height:32px;border:1px solid #dcdce0;border-radius:3px"></div>
  <div class="abs" style="left:80px;top:256px;font-size:10px;color:#666">~</div>
  <div class="abs" style="left:88px;top:243px;width:47px;height:32px;border:1px solid #dcdce0;border-radius:3px"></div>
</div>

<!-- FLOATING BUTTONS -->
<div class="fab" style="top:79px;background:#ff3b7b">
  <svg class="abs" style="left:12px;top:12px" width="14" height="14" viewBox="0 0 14 14"><path d="M0.5 4H13.5M0.5 10.5H13.5" stroke="#fff" stroke-width="1.2"/><circle cx="8.6" cy="4" r="1.9" fill="#ff3b7b" stroke="#fff" stroke-width="1.2"/><circle cx="4.6" cy="10.5" r="1.9" fill="#ff3b7b" stroke="#fff" stroke-width="1.2"/></svg>
</div>
<div class="fab" style="top:131px;background:linear-gradient(45deg,#4a36a6 0%,#7223a6 100%)">
  <svg class="abs" style="left:11px;top:12px" width="16" height="15" viewBox="0 0 16 15"><path d="M1 5V1H5M11 1H15V5M15 10V14H11M5 14H1V10" fill="none" stroke="#fff" stroke-width="1.8"/></svg>
</div>

</body></html>
